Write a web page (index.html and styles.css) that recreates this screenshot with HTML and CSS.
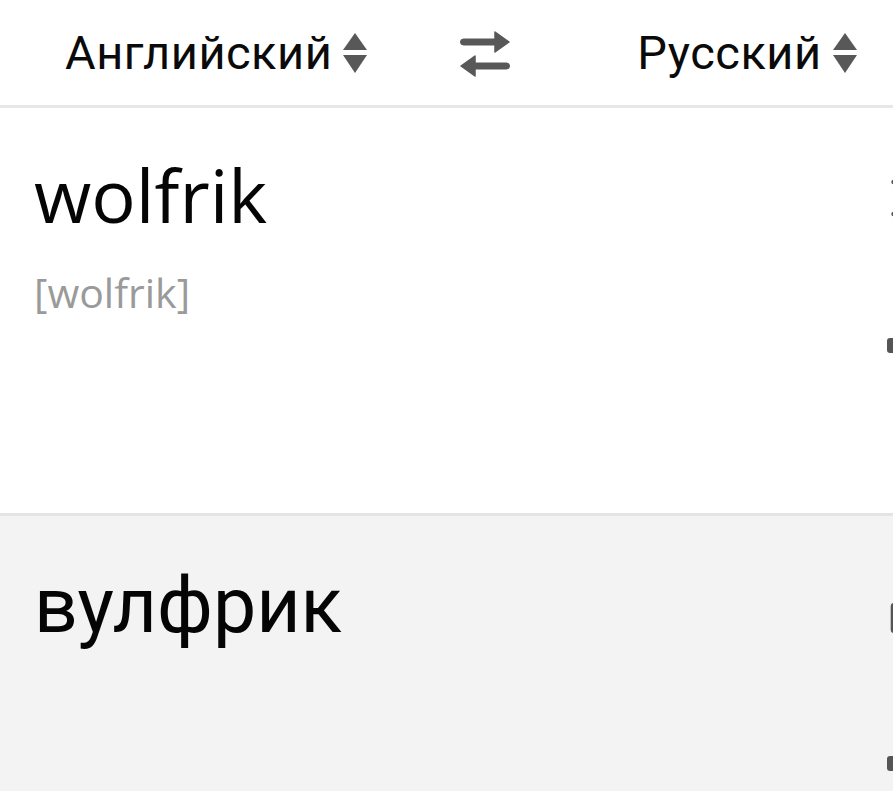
FILE: index.html
```html
<!DOCTYPE html>
<html lang="ru">
<head>
<meta charset="utf-8">
<title>Переводчик</title>
<link rel="stylesheet" href="styles.css">
</head>
<body>
<div class="app">
  <header class="langbar">
    <div class="lang lang-src">
      <span class="lang-name">Английский</span>
      <svg class="sort" width="26" height="42" viewBox="0 0 26 42"><polygon points="13,1 25,18 1,18" /><polygon points="1,23 25,23 13,41" /></svg>
    </div>
    <svg class="swap" width="50" height="46" viewBox="0 0 50 46">
      <rect x="0.5" y="8" width="37" height="6" rx="3" />
      <polygon points="35,1 49,11 35,21" stroke-linejoin="round" stroke-width="1.5" />
      <rect x="12" y="32" width="37.5" height="6" rx="3" />
      <polygon points="15,25 1,35 15,45" stroke-linejoin="round" stroke-width="1.5" />
    </svg>
    <div class="lang lang-dst">
      <span class="lang-name">Русский</span>
      <svg class="sort" width="26" height="42" viewBox="0 0 26 42"><polygon points="13,1 25,18 1,18" /><polygon points="1,23 25,23 13,41" /></svg>
    </div>
  </header>

  <section class="pane pane-src">
    <div class="pane-body">
      <div class="word">wolfrik</div>
      <div class="transcription">[wolfrik]</div>
    </div>
    <div class="pane-tools">
      <svg width="40" height="405" viewBox="0 0 40 405">
        <circle cx="6.5" cy="74" r="2.2" />
        <circle cx="6.5" cy="106" r="2.2" />
        <rect x="0" y="230" width="20" height="15" rx="3" />
      </svg>
    </div>
  </section>

  <section class="pane pane-dst">
    <div class="pane-body">
      <div class="result">вулфрик</div>
    </div>
    <div class="pane-tools">
      <svg width="40" height="275" viewBox="0 0 40 275">
        <rect x="3.7" y="87" width="20" height="30" rx="3" />
        <rect x="0" y="240" width="20" height="15" rx="3" />
      </svg>
    </div>
  </section>
</div>
</body>
</html>
```

FILE: styles.css
```css
html, body {
  margin: 0;
  padding: 0;
}
body {
  width: 893px;
  height: 791px;
  overflow: hidden;
  background: #f3f3f3;
  font-family: Roboto, "Noto Sans", sans-serif;
  color: #000;
}
.app {
  width: 893px;
  height: 791px;
  display: flex;
  flex-direction: column;
  overflow: hidden;
}
.langbar {
  height: 105px;
  flex-shrink: 0;
  background: #fff;
  border-bottom: 3px solid #e7e7e7;
  display: flex;
  align-items: center;
  padding-left: 65px;
  box-sizing: content-box;
}
.lang {
  display: flex;
  align-items: center;
}
.lang-name {
  font-size: 47px;
  line-height: 52px;
  color: #0a0a0a;
  letter-spacing: 0.5px;
}
.sort {
  margin-left: 10px;
  fill: #585858;
}
.swap {
  fill: #585858;
  stroke: #585858;
  margin-left: 92px;
  margin-top: 2px;
}
.lang-dst { margin-left: 127px; }
.pane {
  display: flex;
  overflow: hidden;
  flex-shrink: 0;
}
.pane-src {
  height: 405px;
  background: #fff;
  border-bottom: 3px solid #e4e4e4;
}
.pane-dst {
  flex: 1;
  background: #f3f3f3;
}
.pane-body {
  width: 853px;
  flex-shrink: 0;
  padding-left: 34px;
}
.pane-tools {
  width: 40px;
  flex-shrink: 0;
  fill: #555;
}
.pane-tools svg { display: block; }
.word {
  font-family: "Open Sans", "Noto Sans", sans-serif;
  font-size: 74px;
  line-height: 90px;
  padding-top: 42px;
  color: #050505;
}
.transcription {
  font-family: "Open Sans", "Noto Sans", sans-serif;
  font-size: 41px;
  line-height: 48px;
  margin-top: 28px;
  color: #9a9a9a;
}
.result {
  font-family: Roboto, "Noto Sans", sans-serif;
  font-size: 77px;
  line-height: 92px;
  padding-top: 44px;
  color: #050505;
}
```
